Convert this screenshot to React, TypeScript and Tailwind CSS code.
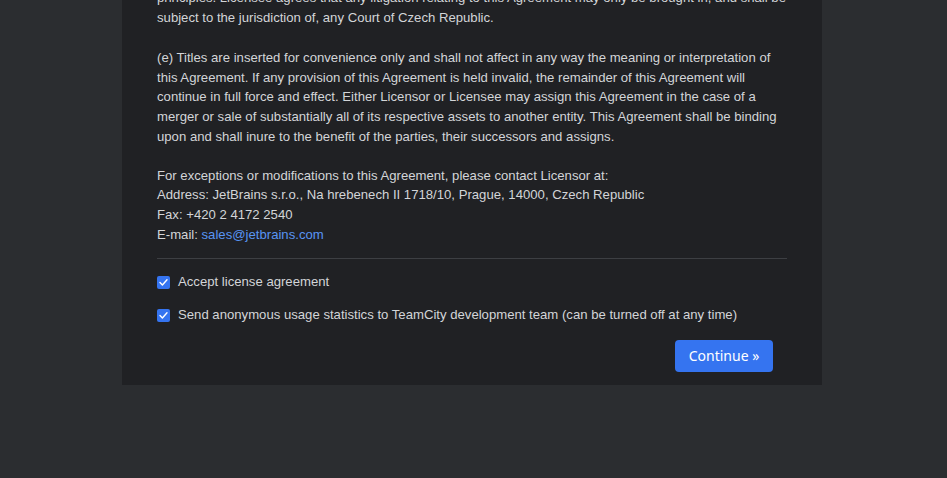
import React from "react";

function Check({ label }: { label: string }) {
  return (
    <label className="flex items-center gap-2 h-5">
      <span className="flex items-center justify-center w-[13px] h-[13px] rounded-[2px] bg-[#3574f0] shrink-0">
        <svg width="11" height="11" viewBox="0 0 11 11" fill="none">
          <path d="M2 5.6 L4.4 8 L9 2.8" stroke="#ffffff" strokeWidth="1.4" strokeLinecap="round" strokeLinejoin="round" />
        </svg>
      </span>
      <span>{label}</span>
    </label>
  );
}

export default function App() {
  return (
    <div className="h-[478px] overflow-hidden bg-[#2b2d30] font-['Liberation_Sans',Arial,sans-serif] text-[13.15px] leading-[19.6px] text-[#d3d5d8]">
      <div className="ml-[122px] w-[700px] bg-[#202124] px-[35px] pb-[13px]">
        <p className="mt-[-12px] whitespace-nowrap">
          principles. Licensee agrees that any litigation relating to this Agreement may only be brought in, and shall be
          <br />
          subject to the jurisdiction of, any Court of Czech Republic.
        </p>
        <p className="mt-[21px] whitespace-nowrap">
          (e) Titles are inserted for convenience only and shall not affect in any way the meaning or interpretation of
          <br />
          this Agreement. If any provision of this Agreement is held invalid, the remainder of this Agreement will
          <br />
          continue in full force and effect. Either Licensor or Licensee may assign this Agreement in the case of a
          <br />
          merger or sale of substantially all of its respective assets to another entity. This Agreement shall be binding
          <br />
          upon and shall inure to the benefit of the parties, their successors and assigns.
        </p>
        <p className="mt-[19.6px] whitespace-nowrap">
          For exceptions or modifications to this Agreement, please contact Licensor at:
          <br />
          Address: JetBrains s.r.o., Na hrebenech II 1718/10, Prague, 14000, Czech Republic
          <br />
          Fax: +420 2 4172 2540
          <br />
          E-mail: <a className="text-[#5895f4]">sales@jetbrains.com</a>
        </p>
        <div className="mt-[14px] h-px bg-[#3d3f43]" />
        <div className="mt-[13px] flex flex-col gap-[13px]">
          <Check label="Accept license agreement" />
          <Check label="Send anonymous usage statistics to TeamCity development team (can be turned off at any time)" />
        </div>
        <div className="mt-[15px] flex justify-end pr-[14px]">
          <button className="h-[32px] w-[98px] rounded-[4px] bg-[#3574f0] text-white text-[14px] font-['Noto_Sans',sans-serif]">
            Continue »
          </button>
        </div>
      </div>
    </div>
  );
}
